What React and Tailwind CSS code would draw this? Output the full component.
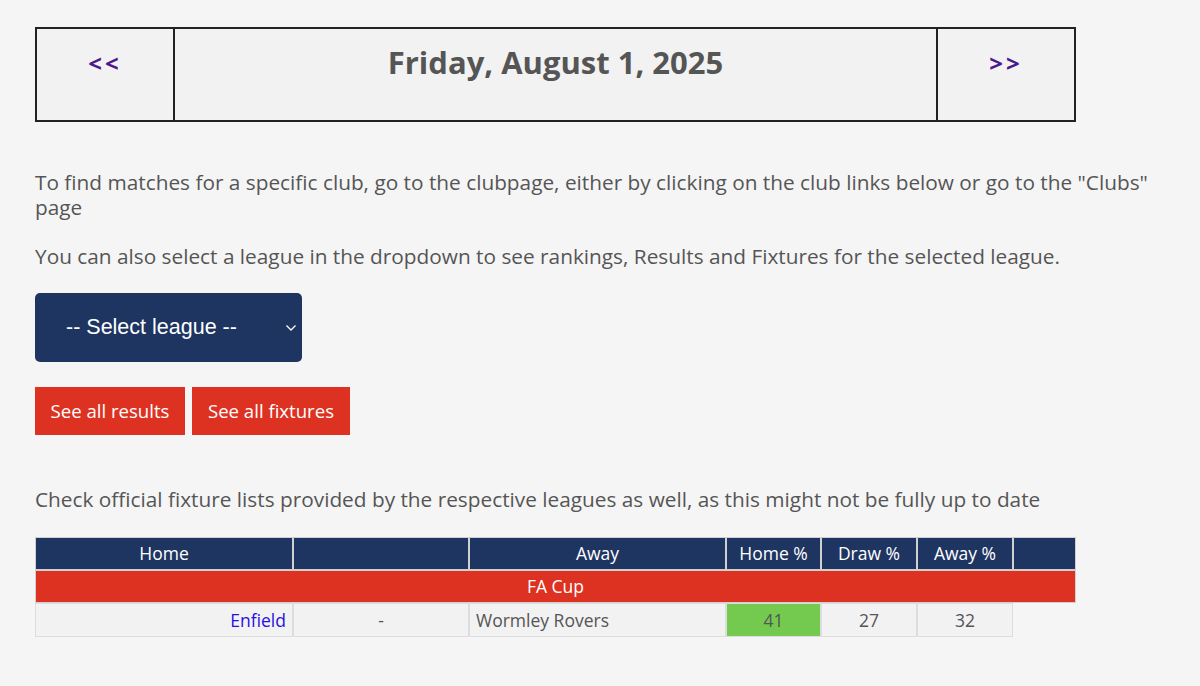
import React from "react";

export default function App() {
  const font = { fontFamily: "'Open Sans', Lato, sans-serif" };
  return (
    <div className="min-h-[686px] w-[1200px] bg-[#f5f5f5] text-[#555555]" style={font}>
      <div className="w-[1200px] pl-[35px] pr-[15px] pt-[27px]">
        <table className="w-[1041px] border-collapse bg-[#f2f2f2]">
          <tbody>
            <tr className="h-[93px]">
              <td className="w-[138px] border-2 border-[#222] align-top pt-[16px] text-center text-[24px] font-bold text-[#4a1a8c] tracking-[3px]">&lt;&lt;</td>
              <td className="border-2 border-[#222] align-top pt-[10px] text-center text-[31px] font-bold text-[#555]">Friday, August 1, 2025</td>
              <td className="w-[138px] border-2 border-[#222] align-top pt-[16px] text-center text-[24px] font-bold text-[#4a1a8c] tracking-[3px]">&gt;&gt;</td>
            </tr>
          </tbody>
        </table>

        <p className="mt-[48px] text-[20.8px] leading-[25px]">
          To find matches for a specific club, go to the clubpage, either by clicking on the club links below or go to the "Clubs" page
        </p>
        <p className="mt-[24px] text-[20.8px] leading-[25px]">
          You can also select a league in the dropdown to see rankings, Results and Fixtures for the selected league.
        </p>

        <div className="mt-[24px] flex h-[69px] w-[267px] items-center rounded-[5px] bg-[#1e3461] text-white">
          <span className="pl-[31px] text-[21.5px]" style={{ fontFamily: "'Liberation Sans', Arial, sans-serif" }}>-- Select league --</span>
          <svg className="ml-auto mr-[5px]" width="12" height="8" viewBox="0 0 12 8">
            <path d="M1.5 1.5 L6 6 L10.5 1.5" fill="none" stroke="white" strokeWidth="1.3" />
          </svg>
        </div>

        <div className="mt-[25px] flex gap-[7px]">
          <div className="flex h-[48px] w-[150px] items-center justify-center bg-[#dd3222] text-[18.6px] text-white">See all results</div>
          <div className="flex h-[48px] w-[158px] items-center justify-center bg-[#dd3222] text-[18.6px] text-white">See all fixtures</div>
        </div>

        <p className="mt-[52px] text-[20.8px] leading-[25px]">
          Check official fixture lists provided by the respective leagues as well, as this might not be fully up to date
        </p>

        <table className="mt-[25px] w-[1041px] border-separate border-spacing-0 text-[17.5px]">
          <tbody>
            <tr className="h-[33px] bg-[#1e3461] text-white">
              <td className="w-[258px] border border-[#d0d0d0] text-center">Home</td>
              <td className="w-[176px] border border-[#d0d0d0]"></td>
              <td className="w-[257px] border border-[#d0d0d0] text-center">Away</td>
              <td className="w-[95px] border border-[#d0d0d0] text-center">Home %</td>
              <td className="w-[96px] border border-[#d0d0d0] text-center">Draw %</td>
              <td className="w-[96px] border border-[#d0d0d0] text-center">Away %</td>
              <td className="border border-[#d0d0d0]"></td>
            </tr>
            <tr className="h-[33px] bg-[#dd3222] text-white">
              <td colSpan={7} className="border border-[#d0d0d0] text-center">FA Cup</td>
            </tr>
            <tr className="h-[34px] bg-[#f2f2f2]">
              <td className="border border-[#dddddd] pr-[6px] text-right text-[#2a0fe0]">Enfield</td>
              <td className="border border-[#dddddd] text-center">-</td>
              <td className="border border-[#dddddd] pl-[6px] text-left">Wormley Rovers</td>
              <td className="border border-[#dddddd] bg-[#74c94f] text-center">41</td>
              <td className="border border-[#dddddd] text-center">27</td>
              <td className="border border-[#dddddd] text-center">32</td>
              <td className="bg-[#f5f5f5]"></td>
            </tr>
          </tbody>
        </table>
      </div>
    </div>
  );
}
